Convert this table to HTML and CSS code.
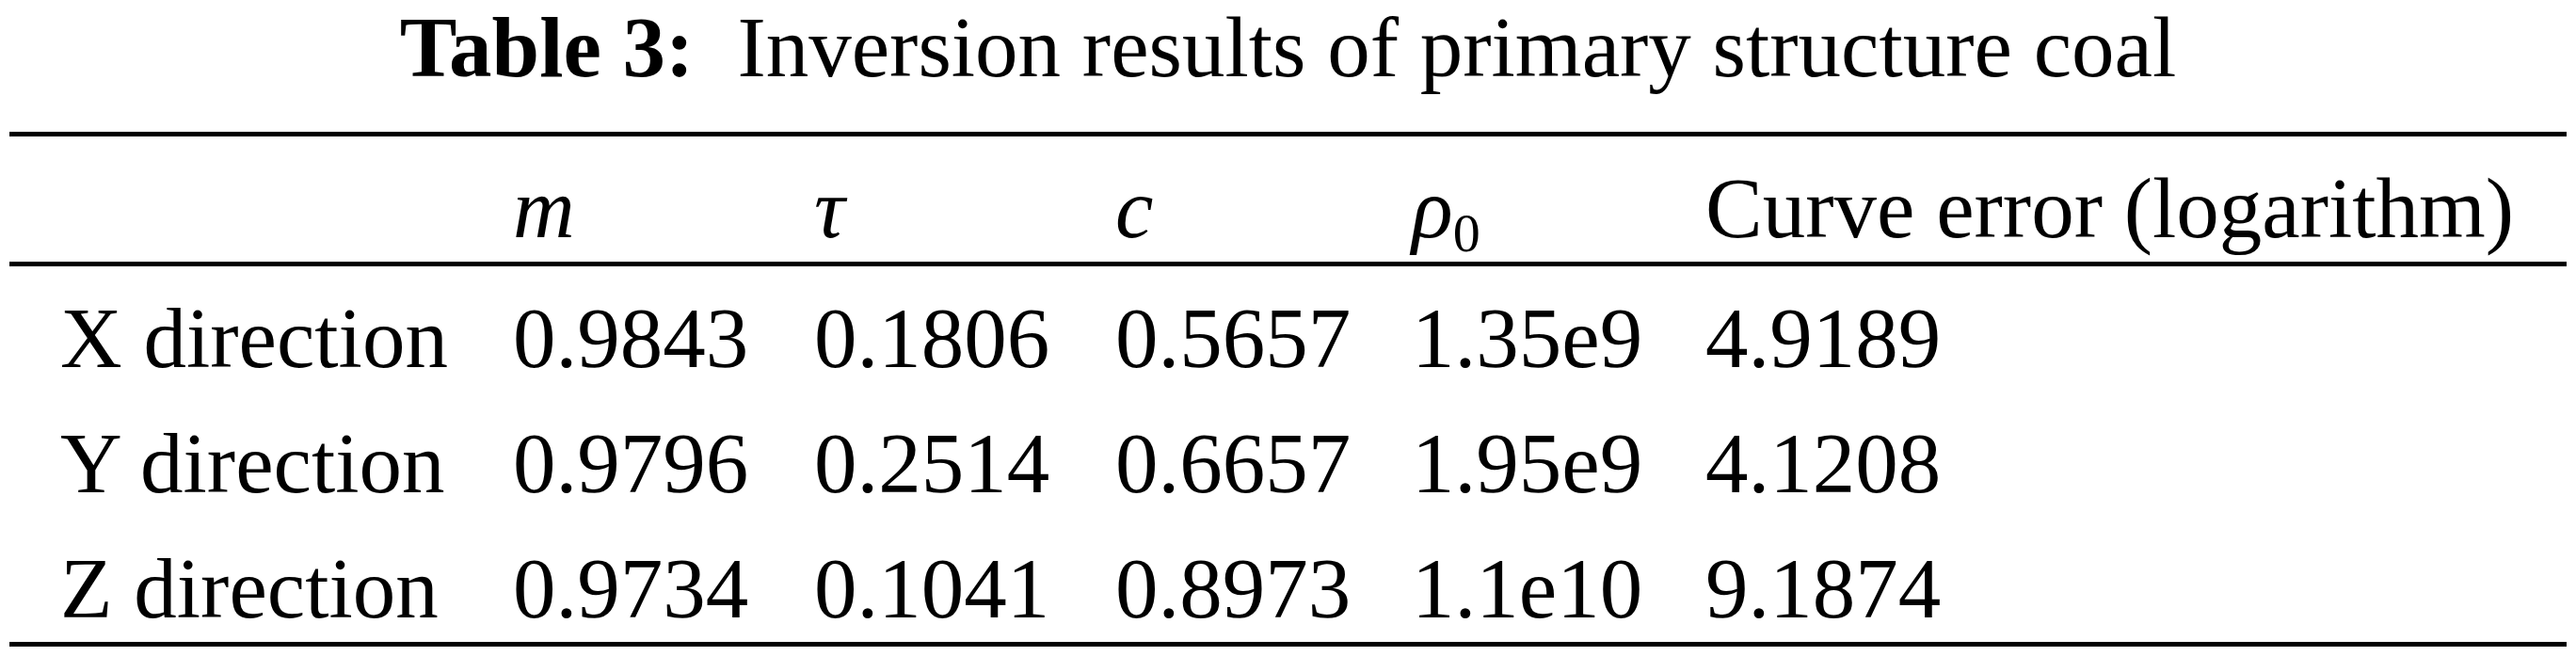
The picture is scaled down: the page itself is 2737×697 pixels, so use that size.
FILE: index.html
```html
<!DOCTYPE html>
<html lang="en">
<head>
<meta charset="utf-8">
<title>Table 3</title>
<link rel="stylesheet" href="styles.css">
</head>
<body>
<div class="page">
  <h1 class="title"><span class="label">Table 3:</span><span class="caption">Inversion results of primary structure coal</span></h1>
  <div class="table">
    <div class="rule"></div>
    <div class="row">
      <div class="cell"></div>
      <div class="cell math">m</div>
      <div class="cell math">τ</div>
      <div class="cell math">c</div>
      <div class="cell"><span class="math">ρ</span><span class="sub">0</span></div>
      <div class="cell">Curve error (logarithm)</div>
    </div>
    <div class="rule"></div>
    <div class="row">
      <div class="cell">X direction</div>
      <div class="cell">0.9843</div>
      <div class="cell">0.1806</div>
      <div class="cell">0.5657</div>
      <div class="cell">1.35e9</div>
      <div class="cell">4.9189</div>
    </div>
    <div class="row">
      <div class="cell">Y direction</div>
      <div class="cell">0.9796</div>
      <div class="cell">0.2514</div>
      <div class="cell">0.6657</div>
      <div class="cell">1.95e9</div>
      <div class="cell">4.1208</div>
    </div>
    <div class="row">
      <div class="cell">Z direction</div>
      <div class="cell">0.9734</div>
      <div class="cell">0.1041</div>
      <div class="cell">0.8973</div>
      <div class="cell">1.1e10</div>
      <div class="cell">9.1874</div>
    </div>
    <div class="rule"></div>
  </div>
</div>
</body>
</html>
```

FILE: styles.css
```css
html, body {
  margin: 0;
  padding: 0;
  background: #ffffff;
}

body {
  font-family: "Liberation Serif", "Times New Roman", serif;
  color: #000000;
  font-size: 91px;
}

.page {
  width: 2717px;
  margin: 0 10px;
}

.title {
  margin: 0 0 39px 0;
  height: 101px;
  line-height: 101px;
  font-size: 91px;
  font-weight: normal;
  text-align: center;
  white-space: nowrap;
}

.title .label {
  font-weight: bold;
}

.title .caption {
  margin-left: 46px;
}

.table {
  display: flex;
  flex-direction: column;
}

.rule {
  height: 5px;
  background: #000000;
}

.row {
  display: grid;
  grid-template-columns: 481px 320px 320px 315px 312px 1fr;
  padding: 20px 0 0 54px;
  height: 133px;
  box-sizing: border-box;
  line-height: 113px;
  white-space: nowrap;
}

.cell {
  white-space: nowrap;
}

.math {
  font-style: italic;
}

.sub {
  font-size: 58px;
  vertical-align: -15px;
  line-height: 0;
}
```
